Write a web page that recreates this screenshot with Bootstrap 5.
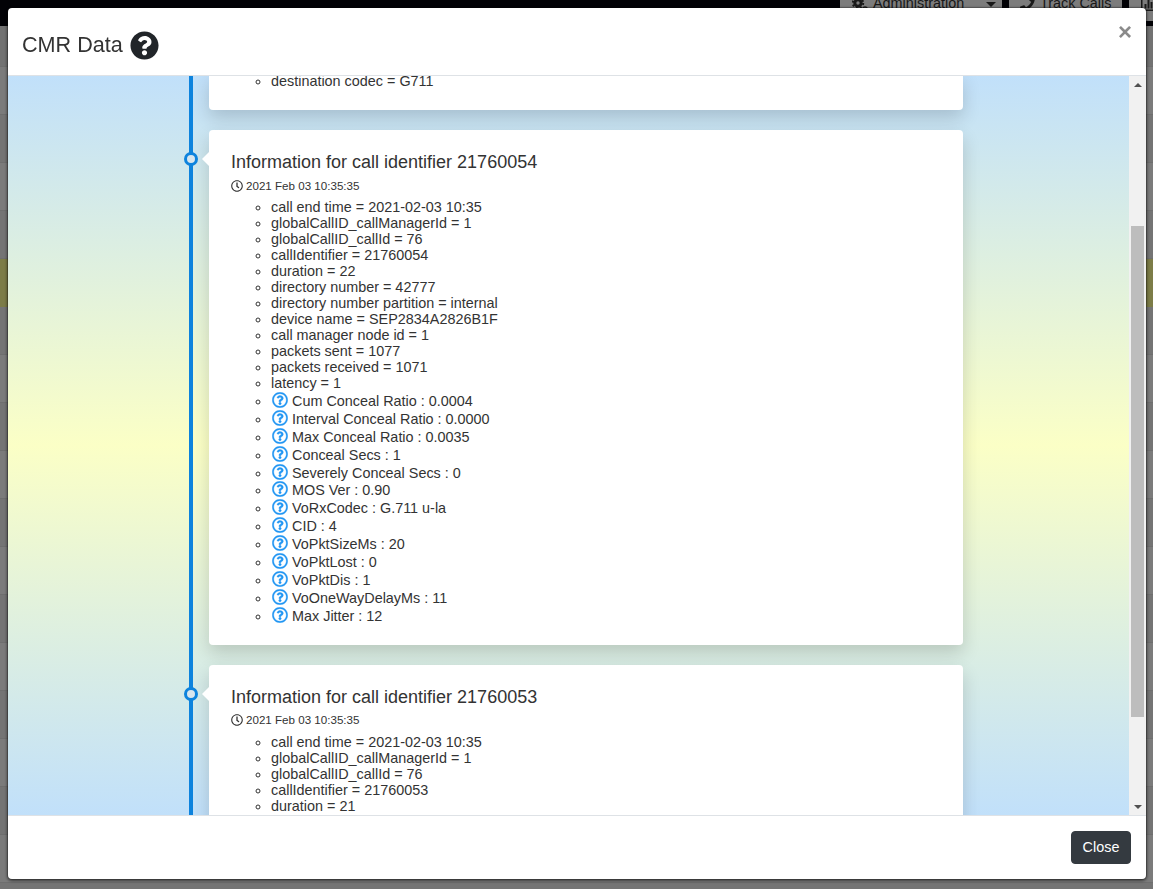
<!DOCTYPE html>
<html lang="en">
<head>
<meta charset="utf-8">
<title>CMR Data</title>
<link rel="stylesheet" href="https://cdn.jsdelivr.net/npm/bootstrap@5.3.0/dist/css/bootstrap.min.css">
<style>
html,body{height:100%;overflow:hidden;font-family:"Liberation Sans",Arial,sans-serif;font-size:14.4px;color:#333;background:#f4f4f4}
.top-bar{height:26px;background:#04040c;overflow:hidden}
.top-btn{height:29px;margin-top:-8px;background:#f8f8f8;color:#333;font-size:14.4px;line-height:21px;border-radius:3px;padding-bottom:6px;flex:none}
.top-btn svg{fill:#333;flex:none}
.top-a{width:162px;margin-right:7px;padding-left:12px;gap:5px}
.top-b{width:113px;margin-right:7px;padding-left:11px;gap:5px}
.top-c{width:24px;padding-left:12px;border-radius:3px 0 0 3px}
.top-caret{width:0;height:0;border:solid transparent;border-width:5px 5px 0;border-top-color:#333;margin-left:17px;margin-top:2px}
.bg-line{height:48px;border-bottom:1px solid #ddd;background:#f6f6f6}
.bg-line.first{height:41px;background:#e4e4e4}
.bg-line.alt{background:#e8e8e8}
.bg-line.warn{background:#f9f98e;border-color:#f9f98e}
.cmr-dialog{max-width:none;width:1140px;margin:7px 0 0 7px}
.cmr-content{height:873px;border-radius:5px;box-shadow:0 1px 3px rgba(0,0,0,.5)}
.cmr-head{height:68px;padding:7px 14px 0;border-bottom:1px solid #dee2e6;align-items:center}
.cmr-title{font-size:21.6px;font-weight:400;color:#333;margin:0;line-height:1}
.cmr-x{background:none;border:0;padding:0;font-size:24px;font-weight:700;line-height:1;color:#8a8a8a;position:absolute;top:12px;right:14px}
.cmr-body{padding:0;flex:1 1 auto;min-height:0;overflow:hidden}
.cmr-pane{flex:1 1 auto;min-width:0;overflow:hidden;background:linear-gradient(180deg,#c1e0fa 0%,#fbffc6 50%,#c1e0fa 100%)}
.cmr-bar{flex:0 0 17px;background:#f1f1f1}
.bar-btn{height:17px}
.bar-up{width:0;height:0;border:solid transparent;border-width:0 4px 4px;border-bottom-color:#505050}
.bar-down{width:0;height:0;border:solid transparent;border-width:4px 4px 0;border-top-color:#505050}
.bar-thumb{height:491px;margin:133px 2px 0;background:#bdbdbd}
.tl-rail{margin:-3px 0 0 181px;border-left:4px solid #0d83dd;padding:0 0 0 16px;width:774px}
.tl-card{width:754px;margin-bottom:20px;padding:22px 22px 21px;border:0;border-radius:4px;background:#fff;box-shadow:0 8px 18px rgba(0,0,0,.16);position:relative}
.tl-card.tail{padding-top:0;border-radius:0 0 4px 4px}
.tl-card.with-dot::before{content:"";position:absolute;left:-7px;top:22px;border:solid transparent;border-width:7px 7px 7px 0;border-right-color:#fff}
.tl-dot{position:absolute;left:-25px;top:22px;width:14px;height:14px;border-radius:50%;border:3px solid #0d83dd;background:#d8e6ee}
.tl-title{font-size:18px;line-height:20px;font-weight:400;margin:0 0 6px;color:#333}
.tl-time{font-size:11.6px;line-height:14px;margin-bottom:7px;color:#333;position:relative;top:.5px}
.tl-time svg{width:12px;height:12px;vertical-align:-2px;fill:#333;margin-right:3px}
.tl-list{list-style:circle;margin:0;padding-left:40px;font-size:14.4px;line-height:16px}
.q-row{height:17.9px;padding-top:2px}
.q-ico{width:16px;height:16px;fill:#2196f3;stroke:#2196f3;stroke-width:10px;margin:-4px 0 0 1px;vertical-align:-2px}
.cmr-foot{height:64px;padding:0 15px;border-top:1px solid #dee2e6;justify-content:flex-end;align-items:center}
.cmr-close{font-size:14.4px;line-height:21px;padding:5px 10.6px;background:#343a40;border-color:#343a40;color:#fff;border-radius:4px}
</style>
</head>
<body>
<svg width="0" height="0" class="position-absolute">
  <symbol id="q-reg" viewBox="0 0 512 512"><path d="M256 8C119.043 8 8 119.083 8 256c0 136.997 111.043 248 248 248s248-111.003 248-248C504 119.083 392.957 8 256 8zm0 448c-110.532 0-200-89.431-200-200 0-110.495 89.472-200 200-200 110.491 0 200 89.471 200 200 0 110.53-89.431 200-200 200zm107.244-255.2c0 67.052-72.421 68.084-72.421 92.863V300c0 6.627-5.373 12-12 12h-45.647c-6.627 0-12-5.373-12-12v-8.659c0-35.745 27.1-50.034 47.579-61.516 17.561-9.845 28.324-16.541 28.324-29.579 0-17.246-21.999-28.693-39.784-28.693-23.189 0-33.894 10.977-48.942 29.969-4.057 5.12-11.46 6.071-16.666 2.123l-27.824-21.098c-5.107-3.872-6.251-11.066-2.644-16.363C184.846 131.491 214.94 112 261.794 112c49.071 0 101.45 38.304 101.45 88.8zM298 368c0 23.159-18.841 42-42 42s-42-18.841-42-42 18.841-42 42-42 42 18.841 42 42z"/></symbol>
  <symbol id="clock" viewBox="0 0 512 512"><path d="M256 8C119 8 8 119 8 256s111 248 248 248 248-111 248-248S393 8 256 8zm0 448c-110.5 0-200-89.5-200-200S145.500 56 256 56s200 89.500 200 200-89.500 200-200 200zm61.800-104.400l-84.900-61.700c-3.100-2.300-4.900-5.900-4.900-9.700V116c0-6.600 5.400-12 12-12h32c6.600 0 12 5.400 12 12v141.700l66.800 48.600c5.400 3.900 6.500 11.400 2.600 16.800L334.600 349c-3.900 5.300-11.400 6.500-16.800 2.600z"/></symbol>
</svg>

<div class="top-bar d-flex justify-content-end">
  <div class="top-btn top-a d-flex align-items-center">
    <svg width="16" height="16" viewBox="0 0 16 16"><circle cx="6" cy="7" r="3.2" fill="none" stroke="#333" stroke-width="3"/><circle cx="6" cy="7" r="5.2" fill="none" stroke="#333" stroke-width="2" stroke-dasharray="2 2.08"/><circle cx="13" cy="13" r="2" fill="none" stroke="#333" stroke-width="1.6"/></svg>
    <span>Administration</span><span class="top-caret"></span>
  </div>
  <div class="top-btn top-b d-flex align-items-center">
    <svg width="15" height="15" viewBox="0 0 512 512"><path d="M493.4 24.600l-104-24c-11.300-2.600-22.900 3.300-27.500 13.900l-48 112c-4.200 9.800-1.400 21.300 6.900 28l60.600 49.600c-36 76.700-98.900 140.500-177.200 177.200l-49.600-60.600c-6.800-8.300-18.200-11.100-28-6.900l-112 48C3.900 366.500-2 378.100.6 389.400l24 104C27.100 504.200 36.700 512 48 512c256.100 0 464-207.500 464-464 0-11.200-7.700-20.900-18.600-23.400z"/></svg>
    <span>Track Calls</span>
  </div>
  <div class="top-btn top-c d-flex align-items-center">
    <svg width="14" height="14" viewBox="0 0 14 14"><path d="M0 0h1.500v12.500H14V14H0zM3.500 7h2v4.500h-2zM6.500 3h2v8.500h-2zM9.500 5h2v6.500h-2z"/></svg>
  </div>
</div>
<div class="bg-line first"></div><div class="bg-line"></div><div class="bg-line alt"></div><div class="bg-line"></div><div class="bg-line alt"></div>
<div class="bg-line warn"></div><div class="bg-line alt"></div><div class="bg-line"></div><div class="bg-line alt"></div>
<div class="bg-line"></div><div class="bg-line alt"></div><div class="bg-line"></div><div class="bg-line alt"></div>
<div class="bg-line"></div><div class="bg-line alt"></div><div class="bg-line"></div><div class="bg-line alt"></div>
<div class="bg-line"></div><div class="bg-line alt"></div>

<div class="modal-backdrop fade show"></div>
<div class="modal fade show d-block" tabindex="-1">
  <div class="modal-dialog cmr-dialog">
    <div class="modal-content cmr-content">
      <div class="modal-header cmr-head justify-content-start">
        <h5 class="modal-title cmr-title d-flex align-items-center gap-2">CMR Data
          <svg width="29" height="29" viewBox="0 0 512 512" fill="#212529"><path d="M504 256c0 136.997-111.043 248-248 248S8 392.997 8 256C8 119.083 119.043 8 256 8s248 111.083 248 248zM262.655 90c-54.497 0-89.255 22.957-116.549 63.758-3.536 5.286-2.353 12.415 2.715 16.258l34.699 26.31c5.205 3.947 12.621 3.008 16.665-2.122 17.864-22.658 30.113-35.797 57.303-35.797 20.429 0 45.698 13.148 45.698 32.958 0 14.976-12.363 22.667-32.534 33.976C247.128 238.528 216 254.941 216 296v4c0 6.627 5.373 12 12 12h56c6.627 0 12-5.373 12-12v-1.333c0-28.462 83.186-29.647 83.186-106.667 0-58.002-60.165-102-116.531-102zM256 338c-25.365 0-46 20.635-46 46 0 25.364 20.635 46 46 46s46-20.636 46-46c0-25.365-20.635-46-46-46z"/></svg>
        </h5>
        <button type="button" class="cmr-x" aria-label="Close">×</button>
      </div>
      <div class="modal-body cmr-body d-flex">
        <div class="cmr-pane">
          <div class="tl-rail">
            <div class="card tl-card tail">
              <ul class="tl-list">
                <li>destination codec = G711</li>
              </ul>
            </div>
            <div class="card tl-card with-dot">
              <span class="tl-dot"></span>
              <h5 class="tl-title">Information for call identifier 21760054</h5>
              <div class="tl-time"><svg><use href="#clock"/></svg>2021 Feb 03 10:35:35</div>
              <ul class="tl-list">
                <li>call end time = 2021-02-03 10:35</li>
                <li>globalCallID_callManagerId = 1</li>
                <li>globalCallID_callId = 76</li>
                <li>callIdentifier = 21760054</li>
                <li>duration = 22</li>
                <li>directory number = 42777</li>
                <li>directory number partition = internal</li>
                <li>device name = SEP2834A2826B1F</li>
                <li>call manager node id = 1</li>
                <li>packets sent = 1077</li>
                <li>packets received = 1071</li>
                <li>latency = 1</li>
                <li class="q-row"><svg class="q-ico"><use href="#q-reg"/></svg> Cum Conceal Ratio : 0.0004</li>
                <li class="q-row"><svg class="q-ico"><use href="#q-reg"/></svg> Interval Conceal Ratio : 0.0000</li>
                <li class="q-row"><svg class="q-ico"><use href="#q-reg"/></svg> Max Conceal Ratio : 0.0035</li>
                <li class="q-row"><svg class="q-ico"><use href="#q-reg"/></svg> Conceal Secs : 1</li>
                <li class="q-row"><svg class="q-ico"><use href="#q-reg"/></svg> Severely Conceal Secs : 0</li>
                <li class="q-row"><svg class="q-ico"><use href="#q-reg"/></svg> MOS Ver : 0.90</li>
                <li class="q-row"><svg class="q-ico"><use href="#q-reg"/></svg> VoRxCodec : G.711 u-la</li>
                <li class="q-row"><svg class="q-ico"><use href="#q-reg"/></svg> CID : 4</li>
                <li class="q-row"><svg class="q-ico"><use href="#q-reg"/></svg> VoPktSizeMs : 20</li>
                <li class="q-row"><svg class="q-ico"><use href="#q-reg"/></svg> VoPktLost : 0</li>
                <li class="q-row"><svg class="q-ico"><use href="#q-reg"/></svg> VoPktDis : 1</li>
                <li class="q-row"><svg class="q-ico"><use href="#q-reg"/></svg> VoOneWayDelayMs : 11</li>
                <li class="q-row"><svg class="q-ico"><use href="#q-reg"/></svg> Max Jitter : 12</li>
              </ul>
            </div>
            <div class="card tl-card with-dot">
              <span class="tl-dot"></span>
              <h5 class="tl-title">Information for call identifier 21760053</h5>
              <div class="tl-time"><svg><use href="#clock"/></svg>2021 Feb 03 10:35:35</div>
              <ul class="tl-list">
                <li>call end time = 2021-02-03 10:35</li>
                <li>globalCallID_callManagerId = 1</li>
                <li>globalCallID_callId = 76</li>
                <li>callIdentifier = 21760053</li>
                <li>duration = 21</li>
              </ul>
            </div>
          </div>
        </div>
        <div class="cmr-bar d-flex flex-column">
          <div class="bar-btn d-flex align-items-center justify-content-center"><span class="bar-up"></span></div>
          <div class="flex-grow-1"><div class="bar-thumb"></div></div>
          <div class="bar-btn d-flex align-items-center justify-content-center"><span class="bar-down"></span></div>
        </div>
      </div>
      <div class="modal-footer cmr-foot">
        <button type="button" class="btn btn-dark cmr-close m-0">Close</button>
      </div>
    </div>
  </div>
</div>
<script src="https://cdn.jsdelivr.net/npm/bootstrap@5.3.0/dist/js/bootstrap.bundle.min.js"></script>
</body>
</html>
